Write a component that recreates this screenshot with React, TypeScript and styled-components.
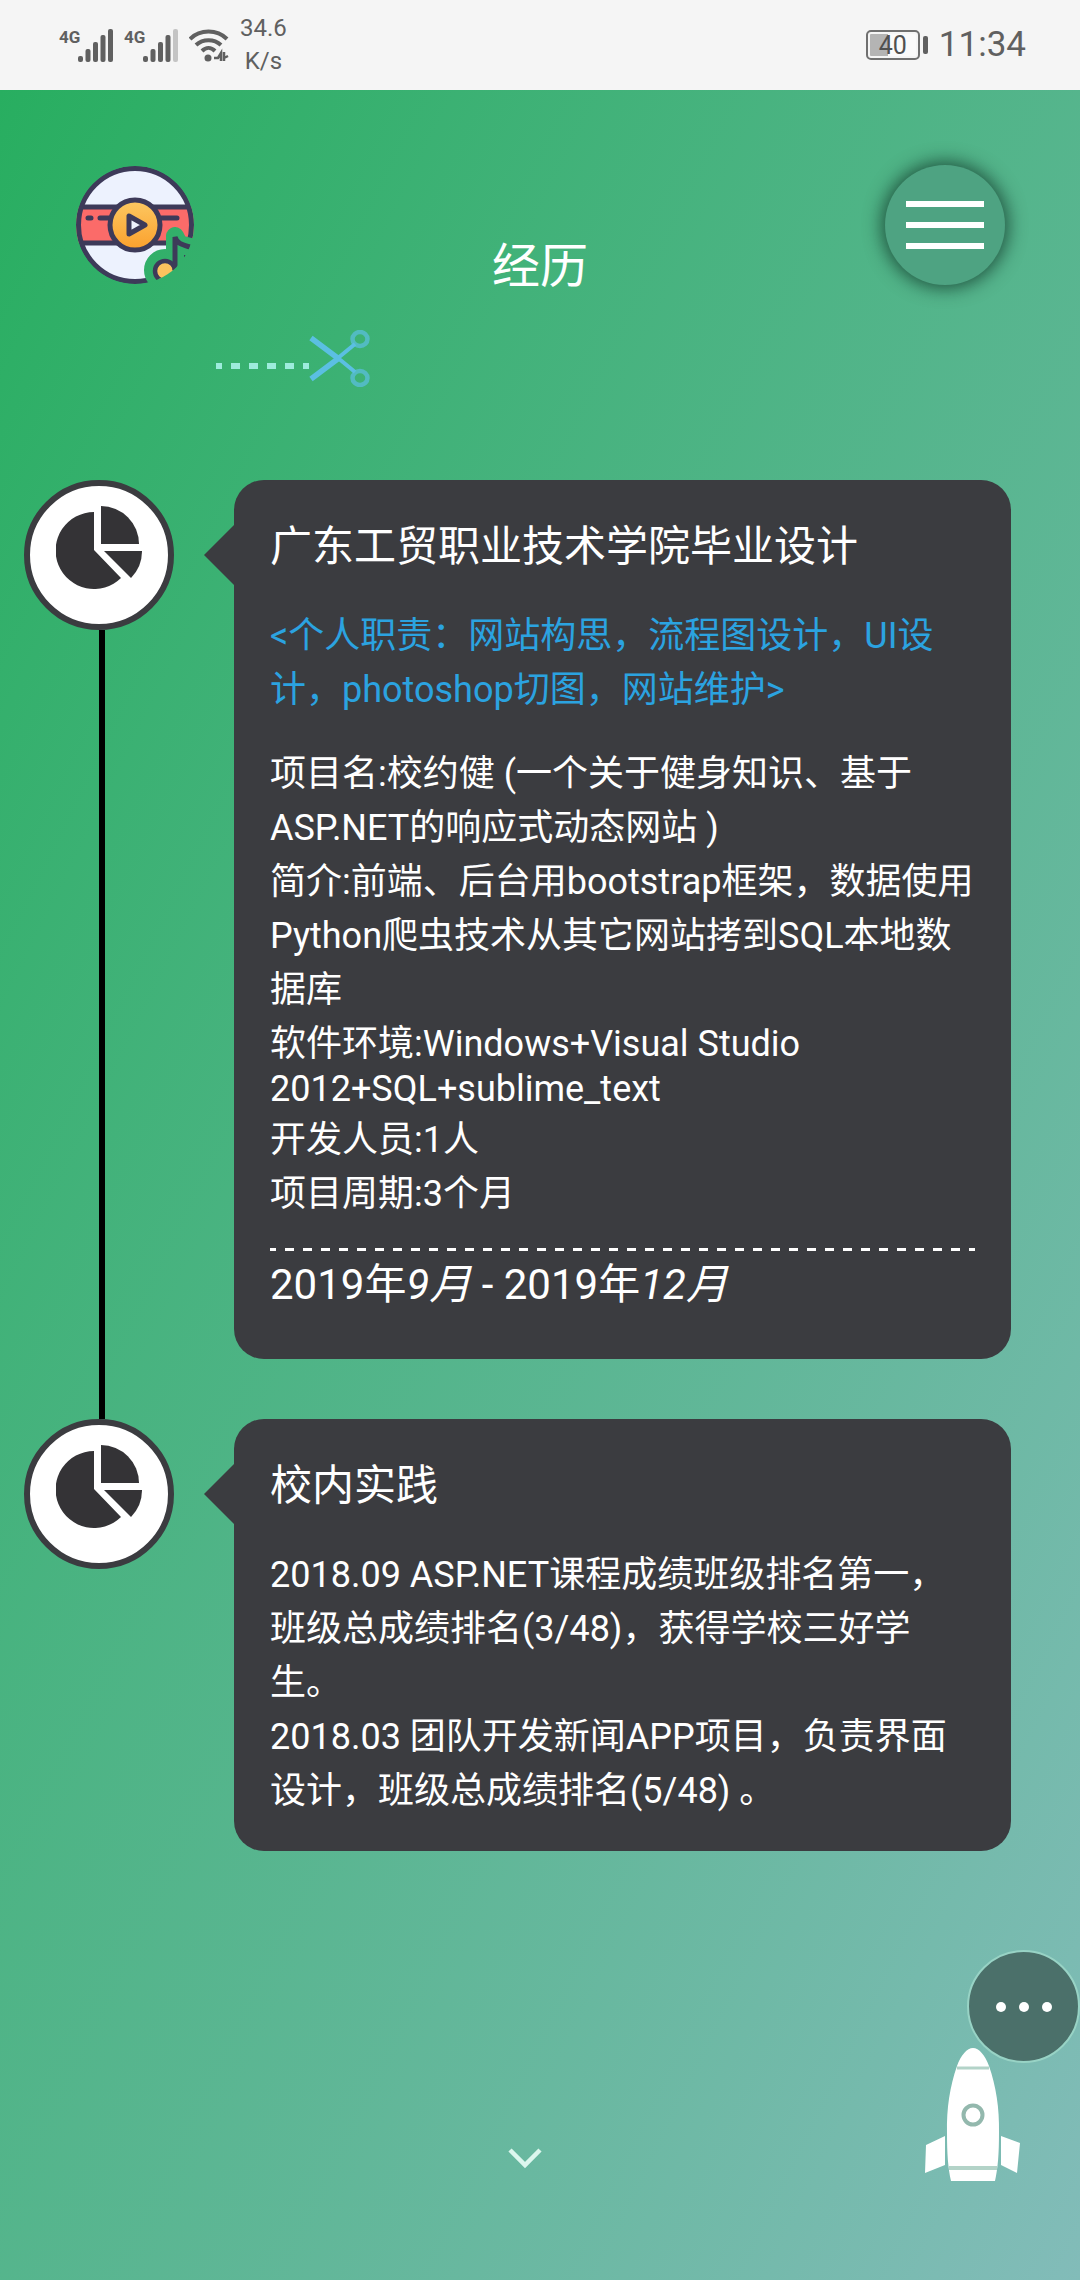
import React from 'react';
import styled, { createGlobalStyle } from 'styled-components';

const GlobalStyle = createGlobalStyle`
  *, *::before, *::after { box-sizing: border-box; }
  body { margin: 0; font-family: Roboto, "Noto Sans CJK SC", sans-serif; color: #fff; }
  h1, h2, p, ol { margin: 0; padding: 0; font-weight: 400; }
  button { border: 0; padding: 0; font: inherit; color: inherit; cursor: pointer; }
  svg { display: block; flex: none; }
`;

const Screen = styled.div`
  min-height: 100vh;
  display: flex;
  flex-direction: column;
`;

/* ---------- status bar ---------- */

const StatusBar = styled.div`
  height: 90px;
  flex: none;
  display: flex;
  align-items: center;
  justify-content: space-between;
  padding: 0 54px 0 59px;
  background: #f5f5f5;
  color: #606060;
`;

const StatusGroup = styled.div`
  display: flex;
  align-items: center;
  gap: 11px;
`;

const Signal = styled.div`
  display: flex;
  align-items: flex-start;
`;

const Network = styled.span`
  width: 19px;
  font-size: 17px;
  line-height: 16px;
  font-weight: 700;
`;

const Speed = styled.div`
  display: flex;
  flex-direction: column;
  align-items: center;
  font-size: 24px;
  line-height: 33px;
`;

const Battery = styled.div`
  display: flex;
  align-items: center;
  gap: 3px;
  &::after {
    content: '';
    width: 5px;
    height: 18px;
    border-radius: 2px;
    background: #606060;
  }
`;

const BatteryCell = styled.div`
  width: 54px;
  height: 30px;
  border: 2px solid #707070;
  border-radius: 5px;
  padding: 2px;
  background: linear-gradient(to right, #b4b4b4 40%, #fafafa 40%) content-box;
  text-align: center;
  font-size: 25px;
  line-height: 24px;
  color: #505050;
`;

const Clock = styled.span`
  font-size: 35px;
  line-height: 42px;
`;

/* ---------- page ---------- */

const Page = styled.main`
  flex: 1;
  position: relative;
  background: linear-gradient(to bottom right, #28ae60, #82bcb9);
`;

const Header = styled.header`
  display: grid;
  grid-template-columns: 1fr auto 1fr;
  align-items: start;
  padding: 75px 75px 0;
`;

const HomeLink = styled.a`
  justify-self: start;
`;

const PageTitle = styled.h1`
  align-self: end;
  margin-top: 72px;
  font-size: 48px;
  line-height: 60px;
`;

const MenuButton = styled.button`
  justify-self: end;
  width: 120px;
  height: 120px;
  border-radius: 50%;
  display: flex;
  flex-direction: column;
  align-items: center;
  justify-content: center;
  gap: 15px;
  background: #4ea382;
  box-shadow: 0 0 18px 3px rgba(10, 40, 30, 0.7);
`;

const MenuBar = styled.span`
  width: 78px;
  height: 6px;
  background: #fff;
`;

const CutRow = styled.div`
  display: flex;
  align-items: flex-end;
  padding: 33px 0 0 216px;
`;

const CutDashes = styled.div`
  width: 93px;
  height: 6px;
  margin-bottom: 18px;
  background: repeating-linear-gradient(to right, #9decdc 0 9px, transparent 9px 18px) -3px 0;
`;

const Timeline = styled.ol`
  list-style: none;
  margin-top: 93px;
  padding: 0 69px 0 24px;
`;

const Entry = styled.li`
  display: grid;
  grid-template-columns: 150px minmax(0, 1fr);
  column-gap: 60px;
  &:not(:last-child) > article { margin-bottom: 60px; }
`;

const Rail = styled.div`
  display: flex;
  flex-direction: column;
`;

const Badge = styled.div`
  height: 150px;
  display: flex;
  align-items: center;
  justify-content: center;
  padding-bottom: 16px;
  border: 6px solid #3b3c40;
  border-radius: 50%;
  background: #fff;
`;

const RailLine = styled.div`
  flex: 1;
  width: 6px;
  margin-left: 75px;
  background: #000;
`;

const Card = styled.article`
  position: relative;
  padding: 35px 36px 33px;
  border-radius: 30px;
  background: #3b3c40;
  &::before {
    content: '';
    position: absolute;
    top: 45px;
    right: 100%;
    border: solid transparent;
    border-width: 30px 30px 30px 0;
    border-right-color: #3b3c40;
  }
`;

const CardTitle = styled.h2`
  margin-bottom: 31px;
  font-size: 42px;
  line-height: 63px;
`;

const Text = styled.p<{ $accent?: boolean }>`
  font-size: 36px;
  line-height: 54px;
  color: ${(p) => (p.$accent ? '#2ba3e0' : '#fff')};
  & + & { margin-top: 30px; }
`;

const Latin = styled.span`
  display: block;
  line-height: 36px;
  margin-bottom: 6px;
`;

const Period = styled.footer`
  margin-top: 27px;
  padding-bottom: 7px;
  font-size: 42px;
  line-height: 68px;
  &::before {
    content: '';
    display: block;
    height: 3px;
    background: repeating-linear-gradient(to right, #fff 0 9px, transparent 9px 18px) -3px 0;
  }
`;

/* ---------- floating controls ---------- */

const ScrollHint = styled.a`
  position: absolute;
  left: 508px;
  bottom: 111px;
`;

const ToTop = styled.a`
  position: absolute;
  right: 60px;
  bottom: 98px;
`;

const MoreButton = styled.button`
  position: absolute;
  right: 0;
  bottom: 217px;
  width: 113px;
  height: 113px;
  display: flex;
  align-items: center;
  justify-content: center;
  gap: 13px;
  border: 2px solid #98d3c5;
  border-radius: 50%;
  background: #4b706a;
`;

const Dot = styled.span`
  width: 10px;
  height: 10px;
  border-radius: 50%;
  background: #fff;
`;

/* ---------- drawings ---------- */

const SignalBars = ({ level }: { level: number }) => (
  <svg width="35" height="33" viewBox="0 0 35 33" aria-hidden="true">
    {[6, 13, 20, 27, 33].map((h, i) => (
      <rect key={h} x={i * 7.5} y={33 - h} width="5" height={h} rx="2" fill={i < level ? '#606060' : '#c4c4c4'} />
    ))}
  </svg>
);

const Wifi = () => (
  <svg width="40" height="33" viewBox="0 0 40 33" fill="none" stroke="#606060" strokeWidth="4" aria-hidden="true">
    <path d="M1 10C11 0 28 0 38 10M7 16C14 9.500 25 9.500 32 16M13 22C17 18 22 18 26 22" />
    <circle cx="19" cy="29" r="3.5" fill="#606060" stroke="none" />
    <path d="M25 29H29L32 24V32M35 23V32M35 29L39 27" strokeWidth="2.5" />
  </svg>
);

const Logo = () => (
  <svg width="120" height="120" viewBox="-1 -1 120 120" aria-hidden="true">
    <defs>
      <linearGradient id="hub" x1="0" y1="0" x2="0" y2="1">
        <stop offset="0" stopColor="#fcc862" />
        <stop offset="1" stopColor="#fba02c" />
      </linearGradient>
      <clipPath id="disc"><circle cx="59" cy="59" r="59" /></clipPath>
      <mask id="cutout">
        <rect x="-1" y="-1" width="121" height="121" fill="#fff" />
        <g fill="#000" stroke="#000" strokeWidth="18" strokeLinejoin="round" strokeLinecap="round">
          <circle cx="89" cy="104" r="12" />
          <path d="M99 70V104M99 70L103 78L114 81" />
        </g>
      </mask>
    </defs>
    <g clipPath="url(#disc)">
      <g mask="url(#cutout)">
        <circle cx="59" cy="59" r="57" fill="#edf2fe" />
        <rect x="0" y="41" width="118" height="36" fill="#fb6b69" />
        <g stroke="#3d3a59" strokeWidth="5" fill="none">
          <path d="M4 41H114M4 77H114" />
          <path d="M12 52H15M24 52H34M84 52H101" strokeLinecap="round" />
          <circle cx="59" cy="59" r="56.5" />
          <circle cx="59" cy="59" r="25" fill="url(#hub)" />
          <path d="M53 50V68L69 59Z" fill="#edf2fe" strokeLinejoin="round" />
        </g>
      </g>
      <circle cx="89" cy="105" r="10" fill="#fcc25e" stroke="#3d3a59" strokeWidth="4.5" />
      <path d="M99 104V71C101 78 107 79 114 81" fill="none" stroke="#3d3a59" strokeWidth="5" />
    </g>
  </svg>
);

const Scissors = () => (
  <svg width="61" height="57" viewBox="0 0 61 57" fill="none" stroke="#5bbfe2" aria-hidden="true">
    <path d="M2 8L30 29M2 49L30 28" strokeWidth="5.500" />
    <path d="M29 28L46 14M29 28L46 42" strokeWidth="4" />
    <ellipse cx="51" cy="9" rx="7.5" ry="7" strokeWidth="4.500" opacity="0.7" />
    <ellipse cx="51" cy="48" rx="7.5" ry="7" strokeWidth="4.500" opacity="0.7" />
  </svg>
);

const Pie = () => (
  <svg width="86" height="84" viewBox="0 0 86 84" fill="#343336" aria-hidden="true">
    <path d="M38 45V7A38.500 38.500 0 1 0 65 73Z" />
    <path d="M45 39V1A38 38 0 0 1 83 39Z" />
    <path d="M48 46H86A38 38 0 0 1 75 73Z" />
  </svg>
);

const Rocket = () => (
  <svg width="96" height="134" viewBox="0 0 96 134" aria-hidden="true">
    <path d="M49 0C55 0 61 7 65 18C72 38 75.500 60 75 85C75 105 74 120 71 133H27C24 120 23 105 23 85C22.500 60 26 38 33 18C37 7 43 0 49 0Z" fill="#fff" />
    <path d="M21 88L2 97L1 125L21 117ZM77 88L96 95L93 125L77 117Z" fill="#fff" />
    <path d="M33 20H65" stroke="#b3d3c8" strokeWidth="3" />
    <path d="M25 120H73" stroke="#b3d3c8" strokeWidth="4" />
    <circle cx="49" cy="67" r="9.500" fill="none" stroke="#93b8ad" strokeWidth="4" />
  </svg>
);

const Chevron = () => (
  <svg width="34" height="21" viewBox="0 0 34 21" fill="none" stroke="#dcf7ee" strokeWidth="4.500" aria-hidden="true">
    <path d="M2 2L17 17L32 2" />
  </svg>
);

/* ---------- screen ---------- */

const TimelineEntry = ({ title, line, children }: { title: string; line?: boolean; children: React.ReactNode }) => (
  <Entry>
    <Rail>
      <Badge><Pie /></Badge>
      {line && <RailLine />}
    </Rail>
    <Card>
      <CardTitle>{title}</CardTitle>
      {children}
    </Card>
  </Entry>
);

export default function App() {
  return (
    <Screen id="top">
      <GlobalStyle />
      <StatusBar>
        <StatusGroup>
          <Signal><Network>4G</Network><SignalBars level={5} /></Signal>
          <Signal><Network>4G</Network><SignalBars level={4} /></Signal>
          <Wifi />
          <Speed><span>34.6</span><span>K/s</span></Speed>
        </StatusGroup>
        <StatusGroup>
          <Battery><BatteryCell>40</BatteryCell></Battery>
          <Clock>11:34</Clock>
        </StatusGroup>
      </StatusBar>
      <Page>
        <Header>
          <HomeLink href="#top" aria-label="音乐"><Logo /></HomeLink>
          <PageTitle>经历</PageTitle>
          <MenuButton type="button" aria-label="菜单"><MenuBar /><MenuBar /><MenuBar /></MenuButton>
        </Header>
        <CutRow>
          <CutDashes />
          <Scissors />
        </CutRow>
        <Timeline>
          <TimelineEntry title="广东工贸职业技术学院毕业设计" line>
            <Text $accent>{'<个人职责：网站构思，流程图设计，UI设计，photoshop切图，网站维护>'}</Text>
            <Text>
              项目名:校约健 (一个关于健身知识、基于ASP.NET的响应式动态网站 )<br />
              简介:前端、后台用bootstrap框架，数据使用Python爬虫技术从其它网站拷到SQL本地数据库<br />
              软件环境:Windows+Visual Studio
              <Latin>2012+SQL+sublime_text</Latin>
              开发人员:1人<br />
              项目周期:3个月
            </Text>
            <Period>2019年<em>9月</em> - 2019年<em>12月</em></Period>
          </TimelineEntry>
          <TimelineEntry title="校内实践">
            <Text>
              2018.09 ASP.NET课程成绩班级排名第一，班级总成绩排名(3/48)，获得学校三好学生。<br />
              2018.03 团队开发新闻APP项目，负责界面设计，班级总成绩排名(5/48) 。
            </Text>
          </TimelineEntry>
        </Timeline>
        <ScrollHint href="#more" aria-label="下一页"><Chevron /></ScrollHint>
        <ToTop href="#top" aria-label="返回顶部"><Rocket /></ToTop>
        <MoreButton type="button" aria-label="更多"><Dot /><Dot /><Dot /></MoreButton>
      </Page>
    </Screen>
  );
}
